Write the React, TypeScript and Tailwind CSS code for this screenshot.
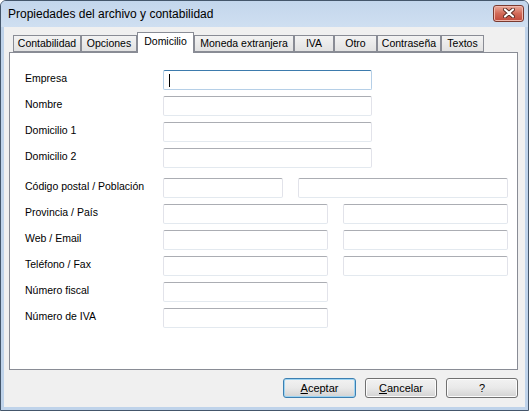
const tabs = [
  { label: "Contabilidad", w: "w-[68px]" },
  { label: "Opciones", w: "w-[56px]" },
  { label: "Domicilio", w: "w-[57px]", active: true },
  { label: "Moneda extranjera", w: "w-[100px]" },
  { label: "IVA", w: "w-[40px]" },
  { label: "Otro", w: "w-[43px]" },
  { label: "Contraseña", w: "w-[64px]" },
  { label: "Textos", w: "w-[43px]" },
];

function Field({ w, focused }: { w: string; focused?: boolean }) {
  return (
    <div
      className={
        focused
          ? `${w} h-[20px] rounded-[2px] border border-[#b5cfe7] border-t-[#3d7bad] bg-white flex items-center pl-[5px]`
          : `${w} h-[20px] rounded-[2px] border border-[#e2e3ea] border-t-[#abadb3] border-b-[#e3e9ef] bg-white`
      }
    >
      {focused && <span className="block w-px h-[13px] bg-black" />}
    </div>
  );
}

function Row({ label, children, extra }: { label: string; children: React.ReactNode; extra?: string }) {
  return (
    <div className={`flex items-center h-[20px] ${extra ?? ""}`}>
      <div className="w-[138px] -mt-[3px] text-[10.5px]">{label}</div>
      <div className="flex gap-[15px]">{children}</div>
    </div>
  );
}

function Button({ children, primary }: { children: React.ReactNode; primary?: boolean }) {
  return (
    <div
      className={
        primary
          ? "w-[73px] h-[20px] rounded-[3px] border border-[#3c7fb1] bg-gradient-to-b from-[#f2f2f2] via-[#e9e9e9] to-[#d2d2d2] shadow-[inset_0_0_0_1px_#9ed4f2] flex items-center justify-center"
          : "w-[72px] h-[20px] rounded-[3px] border border-[#707070] bg-gradient-to-b from-[#f2f2f2] via-[#e9e9e9] to-[#d2d2d2] shadow-[inset_0_0_0_1px_#fcfcfc] flex items-center justify-center"
      }
    >
      {children}
    </div>
  );
}

export default function App() {
  return (
    <div className="w-[529px] h-[411px] overflow-hidden flex flex-col rounded-t-[6px] border border-[#44566b] bg-[#bfd3ea] text-[11px] text-black font-['Liberation_Sans',sans-serif]">
      {/* title bar */}
      <div className="h-[26px] flex items-center justify-between bg-gradient-to-b from-[#c3d6ec] to-[#cfdff1]">
        <span className="pl-[7px] text-[12px] text-black">Propiedades del archivo y contabilidad</span>
        <div className="mr-[4px] -mt-[2px] w-[31px] h-[17px] rounded-[3px] border border-[#7a3a30] bg-gradient-to-b from-[#eaa99a] via-[#d26a58] to-[#c0473a] shadow-[inset_0_0_0_1px_#f0b8ad] flex items-center justify-center">
          <svg width="12" height="10" viewBox="0 0 12 10">
            <path d="M2 1.5 L10 8.5 M10 1.5 L2 8.5" stroke="#5a2a22" strokeWidth="4" strokeLinecap="round" />
            <path d="M2 1.5 L10 8.5 M10 1.5 L2 8.5" stroke="#ffffff" strokeWidth="2.2" strokeLinecap="round" />
          </svg>
        </div>
      </div>

      {/* client area */}
      <div className="flex-1 mx-[3px] mb-[3px] bg-[#f0f0f0] pl-[5px] pr-[7px] pt-[5px] flex flex-col">
        <div className="flex items-end h-[21px] pl-[4px] relative z-10 text-[10.5px]">
          {tabs.map((t) =>
            t.active ? (
              <div
                key={t.label}
                className={`${t.w} h-[21px] border border-b-0 border-[#898c95] bg-white flex items-center justify-center pb-[2px]`}
              >
                {t.label}
              </div>
            ) : (
              <div
                key={t.label}
                className={`${t.w} h-[17px] mb-px border border-[#898c95] bg-gradient-to-b from-[#f3f3f3] to-[#e2e2e2] flex items-center justify-center`}
              >
                {t.label}
              </div>
            )
          )}
        </div>

        <div className="-mt-px h-[318px] border border-[#898c95] bg-white pl-[15px] pt-[17px] flex flex-col gap-[6px]">
          <Row label="Empresa">
            <Field w="w-[209px]" focused />
          </Row>
          <Row label="Nombre">
            <Field w="w-[209px]" />
          </Row>
          <Row label="Domicilio 1">
            <Field w="w-[209px]" />
          </Row>
          <Row label="Domicilio 2">
            <Field w="w-[209px]" />
          </Row>
          <Row label="Código postal / Población" extra="mt-[4px]">
            <Field w="w-[120px]" />
            <Field w="w-[210px]" />
          </Row>
          <Row label="Provincia / País">
            <Field w="w-[165px]" />
            <Field w="w-[165px]" />
          </Row>
          <Row label="Web / Email">
            <Field w="w-[165px]" />
            <Field w="w-[165px]" />
          </Row>
          <Row label="Teléfono / Fax">
            <Field w="w-[165px]" />
            <Field w="w-[165px]" />
          </Row>
          <Row label="Número fiscal">
            <Field w="w-[165px]" />
          </Row>
          <Row label="Número de IVA">
            <Field w="w-[165px]" />
          </Row>
        </div>

        <div className="mt-[8px] flex justify-end gap-[9px]">
          <Button primary>
            <span>
              <span className="underline">A</span>ceptar
            </span>
          </Button>
          <Button>
            <span>
              <span className="underline">C</span>ancelar
            </span>
          </Button>
          <Button>?</Button>
        </div>
      </div>
    </div>
  );
}
